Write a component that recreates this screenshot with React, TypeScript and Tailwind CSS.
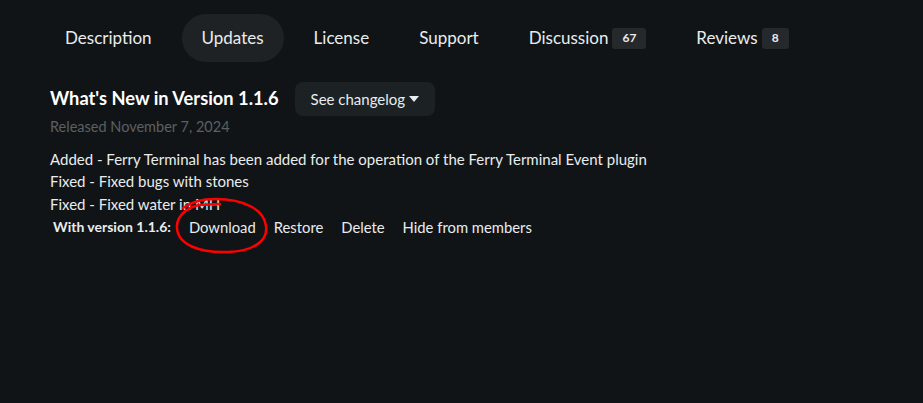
import React from "react";

const tabs = [
  { label: "Description" },
  { label: "Updates", active: true },
  { label: "License" },
  { label: "Support" },
  { label: "Discussion", count: "67" },
  { label: "Reviews", count: "8" },
];

const notes = [
  "Added - Ferry Terminal has been added for the operation of the Ferry Terminal Event plugin",
  "Fixed - Fixed bugs with stones",
  "Fixed - Fixed water in MH",
];

export default function App() {
  return (
    <div className="w-[923px] h-[403px] bg-[#111416] text-[#e9ecee] font-['Lato',sans-serif] relative overflow-hidden">
      {/* Tabs */}
      <nav className="flex items-center gap-[10px] pl-[45px] pt-[14px]">
        {tabs.map((t) => (
          <div
            key={t.label}
            className={`h-[48px] px-5 rounded-full flex items-center gap-1 text-[17px] ${
              t.active ? "bg-[#1f2224]" : ""
            }`}
          >
            <span>{t.label}</span>
            {t.count && (
              <span className="bg-[#26292b] rounded-[3px] px-[10px] h-[21px] flex items-center text-[12px] font-bold">
                {t.count}
              </span>
            )}
          </div>
        ))}
      </nav>

      {/* Update */}
      <section className="pl-[50px] pt-[20px]">
        <div className="flex items-center gap-4">
          <h2 className="text-[18.3px] font-bold text-white">What's New in Version 1.1.6</h2>
          <button className="h-[34px] px-4 rounded-lg bg-[#1c2123] flex items-center gap-1 text-[15px]">
            See changelog
            <svg width="10" height="6" viewBox="0 0 10 6" className="fill-current">
              <path d="M0 0h10L5 6z" />
            </svg>
          </button>
        </div>
        <p className="text-[14.5px] text-[#5b6063]">Released November 7, 2024</p>

        <div className="mt-[10px] text-[15px] leading-[22.5px]">
          {notes.map((n) => (
            <p key={n}>{n}</p>
          ))}
        </div>
        <div className="flex items-center text-[14.8px] pl-[3px] leading-[22px] mt-[1px]">
          <span className="font-bold text-[14px] mr-[18px]">With version 1.1.6:</span>
          <span className="mr-[18px]">Download</span>
          <span className="mr-[18px]">Restore</span>
          <span className="mr-[18px]">Delete</span>
          <span>Hide from members</span>
        </div>
      </section>

      {/* hand drawn annotation */}
      <svg className="absolute left-0 top-0 pointer-events-none" width="923" height="403">
        <path
          d="M220 204 L199 205 C185 208 176 218 177 228 C178 245 200 253 228 252 C255 251 268 240 266 226 C264 210 245 199 215 199 C200 199 190 203 183 208"
          fill="none"
          stroke="#ff0000"
          strokeWidth="2.5"
          strokeLinecap="round"
        />
      </svg>
    </div>
  );
}
